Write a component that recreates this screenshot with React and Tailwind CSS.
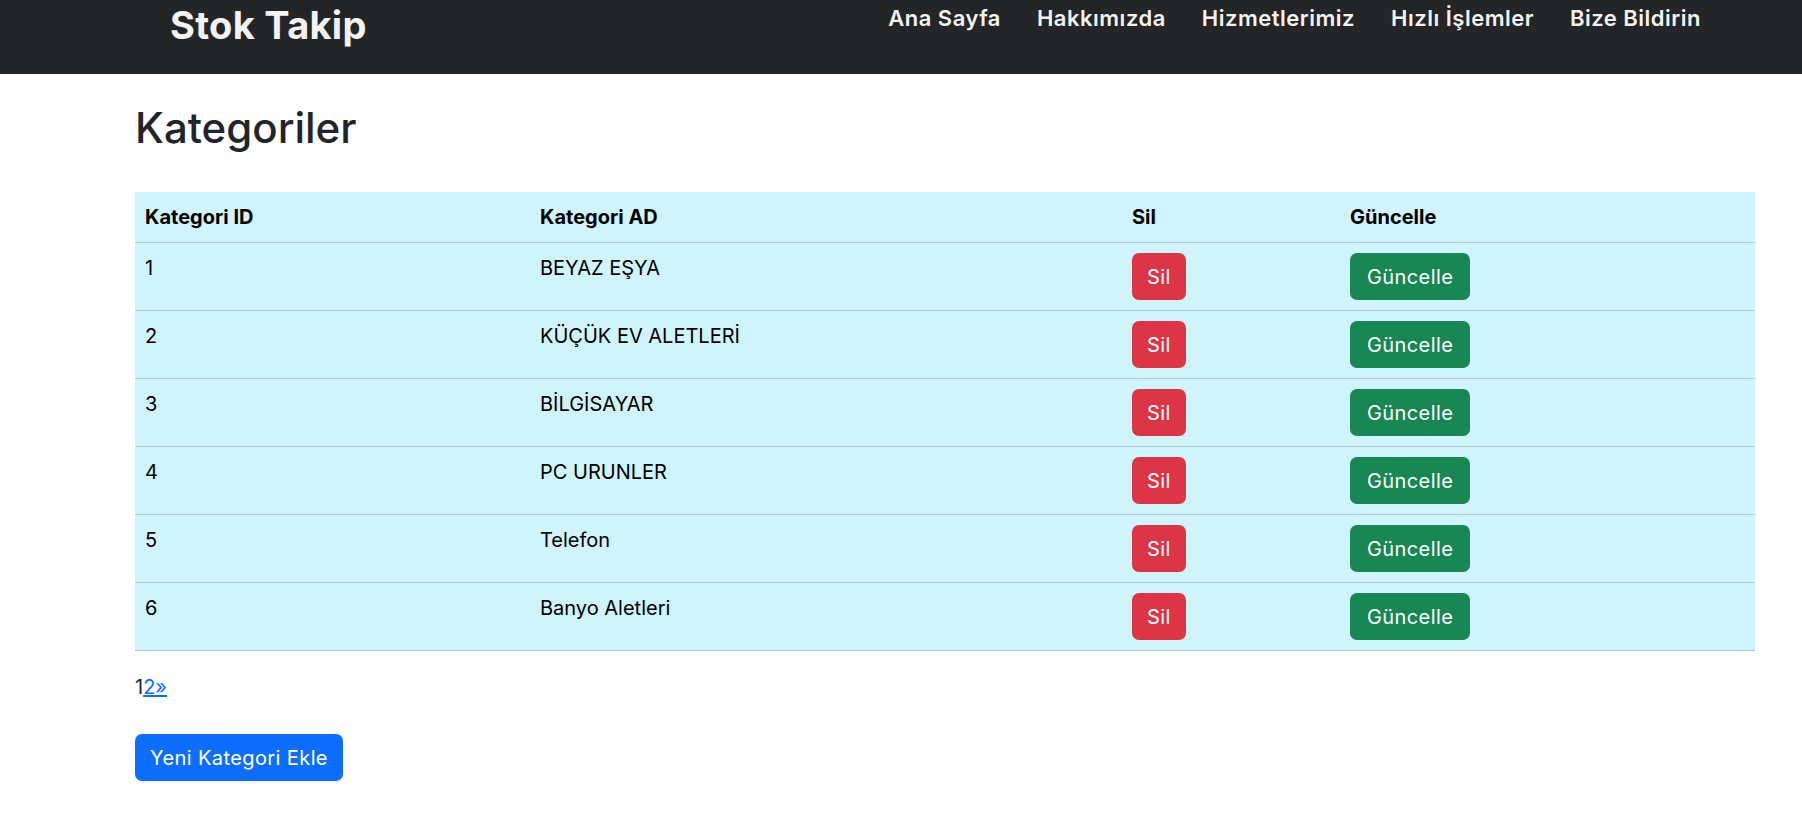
import React from 'react';

const navLinks = ['Ana Sayfa', 'Hakkımızda', 'Hizmetlerimiz', 'Hızlı İşlemler', 'Bize Bildirin'];

const categories = [
    { id: 1, name: 'BEYAZ EŞYA' },
    { id: 2, name: 'KÜÇÜK EV ALETLERİ' },
    { id: 3, name: 'BİLGİSAYAR' },
    { id: 4, name: 'PC URUNLER' },
    { id: 5, name: 'Telefon' },
    { id: 6, name: 'Banyo Aletleri' },
];

function Navbar() {
    return (
        <nav className="h-[74px] bg-[#242527] flex items-start justify-between pl-[170px] pr-[101px]">
            <a href="#" className="text-[38px] leading-[50px] font-bold text-[#f3f3f3] tracking-[0.3px]">Stok Takip</a>
            <ul className="flex gap-[36px] pt-[3px]">
                {navLinks.map(link => (
                    <li key={link}>
                        <a href="#" className="text-[22px] leading-[30px] font-semibold text-[#f3f3f3] tracking-[0.5px]">{link}</a>
                    </li>
                ))}
            </ul>
        </nav>
    );
}

function CategoryTable() {
    return (
        <table className="w-[1620px] table-fixed border-collapse bg-[#cff4fc] text-black text-[20px] leading-[30px]">
            <colgroup>
                <col className="w-[395px]" />
                <col className="w-[592px]" />
                <col className="w-[218px]" />
                <col className="w-[415px]" />
            </colgroup>
            <thead>
                <tr className="border-b border-[#a9cbd2]">
                    <th className="p-[10px] text-left font-bold">Kategori ID</th>
                    <th className="p-[10px] text-left font-bold">Kategori AD</th>
                    <th className="p-[10px] text-left font-bold">Sil</th>
                    <th className="p-[10px] text-left font-bold">Güncelle</th>
                </tr>
            </thead>
            <tbody>
                {categories.map(cat => (
                    <tr key={cat.id} className="border-b border-[#a9cbd2]">
                        <td className="p-[10px] align-top">{cat.id}</td>
                        <td className="p-[10px] align-top">{cat.name}</td>
                        <td className="p-[10px] align-top">
                            <button className="h-[47px] px-[15px] rounded-[7px] bg-[#dc3545] text-white text-[20px] tracking-[0.4px]">Sil</button>
                        </td>
                        <td className="p-[10px] align-top">
                            <button className="h-[47px] px-[17px] rounded-[7px] bg-[#198754] text-white text-[20px] tracking-[0.4px]">Güncelle</button>
                        </td>
                    </tr>
                ))}
            </tbody>
        </table>
    );
}

export default function App() {
    return (
        <div className="min-h-[835px] bg-white font-['Inter','Liberation_Sans',sans-serif]">
            <Navbar />
            <main className="ml-[135px] w-[1620px]">
                <h1 className="mt-[24px] mb-[34px] text-[42px] leading-[60px] font-medium text-[#212529]">Kategoriler</h1>
                <CategoryTable />
                <div className="mt-[21px] text-[20px] leading-[30px] text-[#212529]">
                    1<a href="#" className="text-[#0d6efd] underline">2»</a>
                </div>
                <button className="mt-[32px] h-[47px] px-[15px] rounded-[7px] bg-[#0d6efd] text-white text-[20px] tracking-[0.4px]">Yeni Kategori Ekle</button>
            </main>
        </div>
    );
}
